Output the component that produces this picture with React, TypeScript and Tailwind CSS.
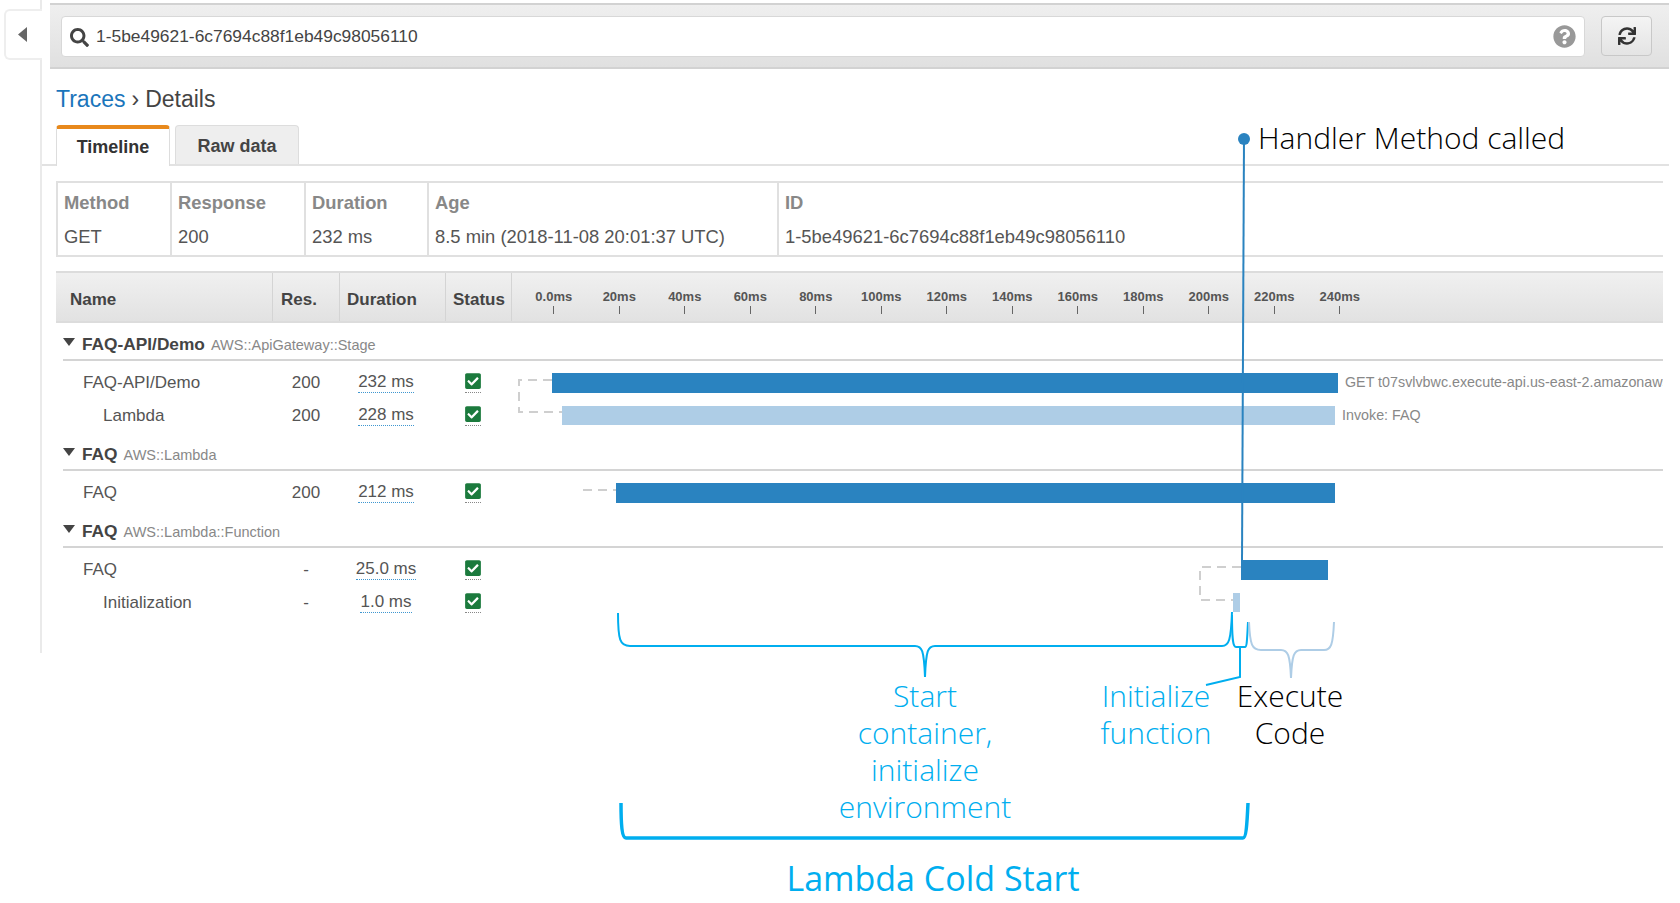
import { FaCheckSquare, FaQuestionCircle, FaSearch, FaSync } from "react-icons/fa";

interface TraceRow {
  name: string;
  child?: boolean;
  res: string;
  duration: string;
  left: number;
  width: number;
  light?: boolean;
  label?: string;
  labelLeft?: number;
}

interface TraceGroup {
  name: string;
  type: string;
  rows: TraceRow[];
}

// bar positions are px from the start of the timeline cell
const groups: TraceGroup[] = [
  {
    name: "FAQ-API/Demo",
    type: "AWS::ApiGateway::Stage",
    rows: [
      { name: "FAQ-API/Demo", res: "200", duration: "232 ms", left: 40, width: 786, label: "GET t07svlvbwc.execute-api.us-east-2.amazonaws.com/Demo/", labelLeft: 833 },
      { name: "Lambda", child: true, res: "200", duration: "228 ms", left: 50, width: 773, light: true, label: "Invoke: FAQ", labelLeft: 830 },
    ],
  },
  {
    name: "FAQ",
    type: "AWS::Lambda",
    rows: [{ name: "FAQ", res: "200", duration: "212 ms", left: 104, width: 719 }],
  },
  {
    name: "FAQ",
    type: "AWS::Lambda::Function",
    rows: [
      { name: "FAQ", res: "-", duration: "25.0 ms", left: 729, width: 87 },
      { name: "Initialization", child: true, res: "-", duration: "1.0 ms", left: 721, width: 7, light: true },
    ],
  },
];

const ticks = ["0.0ms", "20ms", "40ms", "60ms", "80ms", "100ms", "120ms", "140ms", "160ms", "180ms", "200ms", "220ms", "240ms"];

const summary = [
  { label: "Method", value: "GET", w: "w-[114px]" },
  { label: "Response", value: "200", w: "w-[134px]" },
  { label: "Duration", value: "232 ms", w: "w-[123px]" },
  { label: "Age", value: "8.5 min (2018-11-08 20:01:37 UTC)", w: "w-[350px]" },
  { label: "ID", value: "1-5be49621-6c7694c88f1eb49c98056110", w: "flex-1" },
];

function Row({ row }: { row: TraceRow }) {
  return (
    <div className="flex h-[33px] items-center text-[17px] text-[#555]">
      <div className={row.child ? "w-[210px] pl-[40px]" : "w-[210px] pl-[20px]"}>{row.name}</div>
      <div className="w-[66px] text-center">{row.res}</div>
      <div className="flex w-[94px] justify-center">
        <span className="border-b border-dotted border-[#3f97d0] leading-[20px]">{row.duration}</span>
      </div>
      <div className="flex w-[80px] flex-col items-center">
        <FaCheckSquare className="text-[18px] text-[#1b7a3d]" />
        <div className="mt-[2px] w-[16px] border-b border-dotted border-[#888]" />
      </div>
      <div className="relative h-full flex-1 overflow-hidden">
        <div
          className={row.light ? "absolute top-[7px] h-[19px] bg-[#aecde6]" : "absolute top-[7px] h-[20px] bg-[#2a83c0]"}
          style={{ left: row.left - 1, width: row.width }}
        />
        {row.label && (
          <div
            className="absolute top-[6px] whitespace-nowrap text-[14.3px] leading-[20px] text-[#888]"
            style={{ left: row.labelLeft ? row.labelLeft - 1 : 0 }}
          >
            {row.label}
          </div>
        )}
      </div>
    </div>
  );
}

export default function App() {
  return (
    <div className="relative flex h-[903px] w-[1680px] overflow-hidden bg-white font-['Liberation_Sans',Arial,sans-serif]">
      <div className="h-[653px] w-[42px] shrink-0 self-start border-r-2 border-[#eaeaea] pt-[9px]">
        <div className="relative ml-[4px] flex h-[51px] w-[38px] items-center justify-center rounded-l-[6px] border-y-2 border-l-2 border-[#eee] bg-white pr-[2px]">
          <svg width="10" height="15" viewBox="0 0 10 15"><polygon points="9,0 9,15 0,7.5" fill="#666" /></svg>
        </div>
      </div>

      <div className="min-w-0 flex-1">
        {/* search bar */}
        <div className="mt-[3px] ml-[8px] mr-[11px] flex h-[66px] items-center border-y-2 border-[#d2d2d2] bg-gradient-to-b from-[#efefef] to-[#e0e0e0] pl-[11px] pr-[17px]">
          <div className="flex h-[41px] flex-1 items-center rounded-[4px] border border-[#d8d8d8] bg-white pl-[8px] pr-[8px]">
            <FaSearch className="mt-[2px] text-[19px] text-[#444]" />
            <span className="ml-[7px] mt-[1px] flex-1 text-[17.4px] text-[#444]">1-5be49621-6c7694c88f1eb49c98056110</span>
            <FaQuestionCircle className="text-[23px] text-[#999]" />
          </div>
          <div className="ml-[16px] flex h-[40px] w-[51px] items-center justify-center rounded-[4px] border border-[#c8c8c8] bg-gradient-to-b from-[#f4f4f4] to-[#e4e4e4]">
            <FaSync className="text-[18px] text-[#333]" />
          </div>
        </div>

        {/* breadcrumb */}
        <div className="h-[56px] pl-[14px] pt-[15px] text-[23px] leading-[30px] text-[#444]">
          <span className="text-[#1a75bb]">Traces</span>
          <span className="mx-[6px]">›</span>
          <span>Details</span>
        </div>

        {/* tabs */}
        <div className="mr-[11px] flex h-[41px] gap-[5px] border-b-2 border-[#e2e2e2] pl-[14px] text-[18px] font-bold">
          <div className="flex h-[41px] w-[114px] items-center justify-center rounded-t-[4px] border-x border-t-4 border-[#ddd] border-t-[#e8891c] bg-white text-[#333]">Timeline</div>
          <div className="flex h-[39px] w-[124px] items-center justify-center rounded-t-[4px] border border-b-0 border-[#ddd] bg-[#eeeeee] pt-[2px] text-[#444]">Raw data</div>
        </div>

        {/* summary */}
        <div className="ml-[14px] mr-[17px] mt-[15px] flex h-[76px] border-y-2 border-l-2 border-[#e0e0e0] text-[18.4px]">
          {summary.map((s) => (
            <div key={s.label} className={`${s.w} border-r-2 border-[#e0e0e0] pl-[6px] pt-[10px] last:border-r-0`}>
              <div className="font-bold leading-[20px] text-[#888]">{s.label}</div>
              <div className="mt-[14px] leading-[20px] text-[#555]">{s.value}</div>
            </div>
          ))}
        </div>

        {/* table header */}
        <div className="ml-[14px] mr-[17px] mt-[14px] flex h-[52px] items-center border-y-2 border-[#dcdcdc] bg-gradient-to-b from-[#f0f0f0] to-[#e2e2e2] text-[17px] font-bold text-[#444]">
          <div className="flex h-full w-[217px] items-center border-r border-[#d4d4d4] pl-[14px] pt-[5px]">Name</div>
          <div className="flex h-full w-[67px] items-center border-r border-[#d4d4d4] pl-[8px] pt-[5px]">Res.</div>
          <div className="flex h-full w-[106px] items-center border-r border-[#d4d4d4] pl-[7px] pt-[5px]">Duration</div>
          <div className="flex h-full w-[66px] items-center border-r border-[#d4d4d4] pl-[7px] pt-[5px]">Status</div>
          <div className="flex pl-[9px] pt-[8px] text-[13px] text-[#555]">
            {ticks.map((t) => (
              <div key={t} className="flex w-[65.5px] flex-col items-center">
                <span className="leading-[16px]">{t}</span>
                <div className="mt-[1px] h-[8px] w-[1px] bg-[#666]" />
              </div>
            ))}
          </div>
        </div>

        {/* trace groups */}
        <div className="ml-[21px] mr-[17px]">
          {groups.map((g, i) => (
            <div key={g.type}>
              <div className={`flex items-end border-b-2 border-[#d4d4d4] pb-[5px] ${i === 0 ? "h-[38px]" : "h-[39px]"}`}>
                <div className="flex h-[20px] w-[19px] items-center">
                  <svg width="12" height="8" viewBox="0 0 12 8" className="-mt-[5px]"><polygon points="0,0 12,0 6,8" fill="#444" /></svg>
                </div>
                <span className="text-[17.3px] font-bold leading-[20px] text-[#444]">{g.name}</span>
                <span className="-mb-[1px] ml-[6px] text-[14.5px] leading-[20px] text-[#888]">{g.type}</span>
              </div>
              <div className="mt-[5px]">
                {g.rows.map((r) => (
                  <Row key={r.name + r.duration} row={r} />
                ))}
              </div>
            </div>
          ))}
        </div>

        {/* annotation labels */}
        <div className="mt-[58px] flex font-['Open_Sans',sans-serif] text-[30px] font-light leading-[37px] text-[#00aeef]">
          <div className="ml-[763px] w-[240px] text-center">Start<br />container,<br />initialize<br />environment</div>
          <div className="ml-[41px] w-[140px] text-center">Initialize<br />function</div>
          <div className="w-[128px] text-center text-black">Execute<br />Code</div>
        </div>
        <div className="ml-[591px] mt-[31px] w-[600px] text-center font-['Open_Sans',sans-serif] text-[34px] leading-[44px] text-[#00aeef]">Lambda Cold Start</div>
      </div>

      {/* callout over the timeline */}
      <svg className="pointer-events-none absolute left-0 top-0" width="1680" height="903" viewBox="0 0 1680 903" fill="none">
        <g stroke="#cfcfcf" strokeWidth="2" strokeDasharray="9 6">
          <path d="M552 380H519V412H562" />
          <path d="M583 490H616" />
          <path d="M1241 567H1200V600H1233" />
        </g>
        <circle cx="1244" cy="139" r="6" fill="#2a83c0" />
        <path d="M1244 139L1242 561" stroke="#2a83c0" strokeWidth="2" />
        <g stroke="#00aeef" strokeWidth="2">
          <path d="M618 613C618 640 620 646 630 646L915 646C922 646 924 650 925 677C926 650 928 646 935 646L1222 646C1229 646 1231 640 1232 612" />
          <path d="M1232 615C1232 640 1233 647 1236 647L1245 647C1247 647 1247 640 1248 622" />
          <path d="M1240 647L1240 677L1206 685" />
          <path d="M621 803C621 825 622 838 626 838L1243 838C1246 838 1247 825 1248 803" strokeWidth="3.5" />
        </g>
        <path d="M1249 622C1250 645 1252 650 1261 650L1281 650C1288 650 1290 655 1291 678C1292 655 1294 650 1301 650L1324 650C1331 650 1333 645 1334 622" stroke="#aecde6" strokeWidth="2" />
      </svg>
      <div className="absolute left-[1258px] top-[117px] whitespace-nowrap font-['Open_Sans',sans-serif] text-[30px] font-light leading-[42px] text-black">Handler Method called</div>
    </div>
  );
}
